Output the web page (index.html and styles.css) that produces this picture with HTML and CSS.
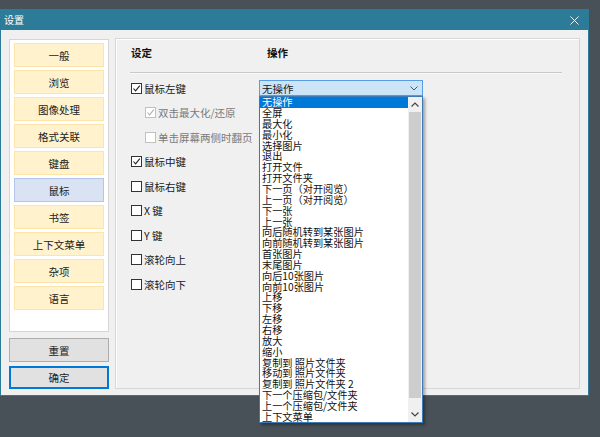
FILE: index.html
```html
<!DOCTYPE html>
<html lang="zh-CN">
<head>
<meta charset="utf-8">
<title>设置</title>
<link rel="stylesheet" href="styles.css">
</head>
<body>
<div class="window">
  <div class="titlebar">
    <span class="title">设置</span>
    <svg class="close" viewBox="0 0 10 10"><path d="M0.5 0.5 L9.5 9.5 M9.5 0.5 L0.5 9.5" stroke="#fff" stroke-width="1" fill="none"/></svg>
  </div>
  <div class="body">
    <div class="sidebar">
      <div class="nav">
        <div class="nav-item">一般</div>
        <div class="nav-item">浏览</div>
        <div class="nav-item">图像处理</div>
        <div class="nav-item">格式关联</div>
        <div class="nav-item">键盘</div>
        <div class="nav-item active">鼠标</div>
        <div class="nav-item">书签</div>
        <div class="nav-item">上下文菜单</div>
        <div class="nav-item">杂项</div>
        <div class="nav-item">语言</div>
      </div>
      <button class="btn">重置</button>
      <button class="btn btn-default">确定</button>
    </div>
    <div class="panel">
      <div class="head"><span>设定</span><span>操作</span></div>
      <div class="sep"></div>
      <div class="rows">
        <div class="row row-combo">
          <span class="cb"><span class="box"><svg viewBox="0 0 9 9"><path d="M1.5 4.5 L3.6 6.8 L7.8 1.6" stroke="#222" stroke-width="1.1" fill="none"/></svg></span>鼠标左键</span>
          <div class="combo">
            <span>无操作</span>
            <svg class="chev" viewBox="0 0 8 5"><path d="M0.5 0.5 L4 4 L7.5 0.5" stroke="#555" stroke-width="1" fill="none"/></svg>
            <div class="dropdown">
              <div class="items">
                <div class="item sel">无操作</div>
                <div class="item">全屏</div>
                <div class="item">最大化</div>
                <div class="item">最小化</div>
                <div class="item">选择图片</div>
                <div class="item">退出</div>
                <div class="item">打开文件</div>
                <div class="item">打开文件夹</div>
                <div class="item">下一页（对开阅览）</div>
                <div class="item">上一页（对开阅览）</div>
                <div class="item">下一张</div>
                <div class="item">上一张</div>
                <div class="item">向后随机转到某张图片</div>
                <div class="item">向前随机转到某张图片</div>
                <div class="item">首张图片</div>
                <div class="item">末尾图片</div>
                <div class="item">向后10张图片</div>
                <div class="item">向前10张图片</div>
                <div class="item">上移</div>
                <div class="item">下移</div>
                <div class="item">左移</div>
                <div class="item">右移</div>
                <div class="item">放大</div>
                <div class="item">缩小</div>
                <div class="item">复制到 照片文件夹</div>
                <div class="item">移动到 照片文件夹</div>
                <div class="item">复制到 照片文件夹 2</div>
                <div class="item">下一个压缩包/文件夹</div>
                <div class="item">上一个压缩包/文件夹</div>
                <div class="item">上下文菜单</div>
              </div>
              <div class="scroll">
                <div class="arrow up"><svg viewBox="0 0 8 5"><path d="M0.5 4.5 L4 1 L7.5 4.5" stroke="#444" stroke-width="1.2" fill="none"/></svg></div>
                <div class="thumb"></div>
                <div class="arrow down"><svg viewBox="0 0 8 5"><path d="M0.5 0.5 L4 4 L7.5 0.5" stroke="#444" stroke-width="1.2" fill="none"/></svg></div>
              </div>
            </div>
          </div>
        </div>
        <div class="row indent disabled">
          <span class="cb"><span class="box"><svg viewBox="0 0 9 9"><path d="M1.5 4.5 L3.6 6.8 L7.8 1.6" stroke="#b0b0b0" stroke-width="1.1" fill="none"/></svg></span>双击最大化/还原</span>
        </div>
        <div class="row indent disabled">
          <span class="cb"><span class="box"></span>单击屏幕两侧时翻页</span>
        </div>
        <div class="row">
          <span class="cb"><span class="box"><svg viewBox="0 0 9 9"><path d="M1.5 4.5 L3.6 6.8 L7.8 1.6" stroke="#222" stroke-width="1.1" fill="none"/></svg></span>鼠标中键</span>
        </div>
        <div class="row"><span class="cb"><span class="box"></span>鼠标右键</span></div>
        <div class="row"><span class="cb"><span class="box"></span>X 键</span></div>
        <div class="row"><span class="cb"><span class="box"></span>Y 键</span></div>
        <div class="row"><span class="cb"><span class="box"></span>滚轮向上</span></div>
        <div class="row"><span class="cb"><span class="box"></span>滚轮向下</span></div>
      </div>
    </div>
  </div>
</div>
</body>
</html>
```
FILE: styles.css
```css
html, body {
  margin: 0;
  padding: 0;
}
body {
  width: 600px;
  height: 437px;
  overflow: hidden;
  background: #485157;
  font-family: "Noto Sans CJK SC", "Noto Sans", sans-serif;
  font-size: 10.5px;
  color: #1a1a1a;
}
.window {
  margin-top: 9px;
  width: 589px;
  height: 387px;
  box-sizing: border-box;
  border: 1px solid #2b7a98;
  background: #f0f0f0;
  display: flex;
  flex-direction: column;
}
.titlebar {
  height: 20px;
  flex: none;
  background: #2c7b99;
  display: flex;
  align-items: center;
  justify-content: space-between;
  padding: 0 9px 0 3px;
  color: #fff;
}
.title {
  font-size: 10px;
  line-height: 12px;
}
.close {
  width: 9px;
  height: 9px;
}
.body {
  flex: 1;
  display: flex;
  gap: 6px;
  padding: 8px 8px 6px 8px;
  min-height: 0;
}
.sidebar {
  width: 100px;
  flex: none;
  display: flex;
  flex-direction: column;
}
.nav {
  margin-top: 1px;
  height: 293px;
  box-sizing: border-box;
  background: #fff;
  border: 1px solid #d5d5d5;
  padding: 3px 4px;
  display: flex;
  flex-direction: column;
  gap: 3px;
}
.nav-item {
  height: 24px;
  box-sizing: border-box;
  border: 1px solid #fde4aa;
  background: #fff2cc;
  display: flex;
  align-items: center;
  justify-content: center;
  color: #222;
}
.nav-item.active {
  background: #dae3f3;
  border-color: #b4c6e7;
}
.btn {
  height: 24px;
  margin: 6px 0 0 0;
  padding: 0;
  box-sizing: border-box;
  border: 1px solid #adadad;
  background: #e1e1e1;
  font: inherit;
  color: #222;
}
.btn-default {
  height: 23px;
  margin-top: 4px;
  border: 1px solid #0078d7;
  box-shadow: inset 0 0 0 1px #0078d7;
}
.panel {
  flex: 1;
  border: 1px solid #d6d6d6;
  box-shadow: inset 1px 1px 0 #fff;
  padding: 0 17px 0 15px;
}
.head {
  height: 26px;
  display: grid;
  grid-template-columns: 136px 1fr;
  align-items: center;
  font-weight: bold;
  color: #111;
}
.sep {
  height: 1px;
  margin: 7px 0 0 -1px;
  background: #c8c8c8;
  box-shadow: 0 1px 0 #fafafa;
}
.rows {
  margin-top: 3px;
}
.row {
  height: 24.5px;
  display: flex;
  align-items: center;
}
.row-combo {
  display: grid;
  grid-template-columns: 128px 164px;
  align-items: center;
}
.indent {
  padding-left: 14px;
}
.cb {
  display: flex;
  align-items: center;
  gap: 2px;
  white-space: nowrap;
}
.box {
  width: 11px;
  height: 11px;
  box-sizing: border-box;
  border: 1px solid #333;
  background: #fff;
  display: flex;
}
.box svg {
  width: 9px;
  height: 9px;
}
.disabled {
  color: #7a7a7a;
}
.disabled .box {
  border-color: #c0c0c0;
}
.combo {
  position: relative;
  width: 164px;
  height: 16px;
  box-sizing: border-box;
  border: 1px solid #569de5;
  background: #cce4f7;
  display: flex;
  align-items: center;
  justify-content: space-between;
  padding: 0 4px 0 2px;
}
.chev {
  width: 8px;
  height: 5px;
}
.dropdown {
  position: absolute;
  top: 15px;
  left: -1px;
  width: 164px;
  height: 327px;
  box-sizing: border-box;
  border: 1px solid #3d7ab8;
  background: #fff;
  display: flex;
  box-shadow: 2px 2px 3px rgba(0, 0, 0, 0.35);
  z-index: 5;
}
.items {
  flex: 1;
  overflow: hidden;
}
.item {
  height: 10.85px;
  line-height: 10.85px;
  font-size: 10.2px;
  padding-left: 2px;
  white-space: nowrap;
  color: #111;
}
.item.sel {
  background: #0078d7;
  color: #fff;
}
.scroll {
  width: 14px;
  flex: none;
  display: flex;
  flex-direction: column;
  background: #f0f0f0;
}
.arrow {
  display: flex;
  justify-content: center;
}
.arrow svg {
  width: 8px;
  height: 5px;
}
.arrow.up {
  height: 15px;
  align-items: center;
}
.arrow.down {
  height: 24px;
  align-items: flex-end;
  padding-bottom: 5px;
  box-sizing: border-box;
}
.thumb {
  flex: 1;
  margin: 0 1px;
  background: #cdcdcd;
}
```
